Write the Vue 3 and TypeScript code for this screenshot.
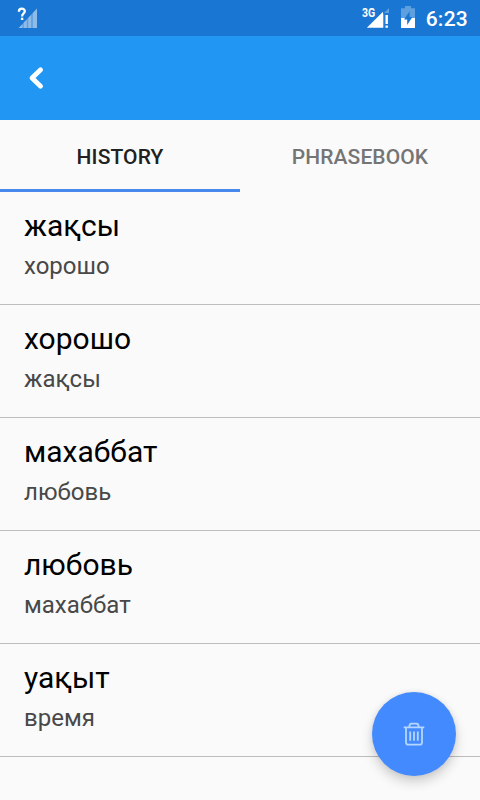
<script setup lang="ts">
import { ref } from 'vue'

interface Entry {
  source: string
  translation: string
}

const tabs: string[] = ['History', 'Phrasebook']
const active = ref<number>(0)
const entries = ref<Entry[]>([
  { source: 'жақсы', translation: 'хорошо' },
  { source: 'хорошо', translation: 'жақсы' },
  { source: 'махаббат', translation: 'любовь' },
  { source: 'любовь', translation: 'махаббат' },
  { source: 'уақыт', translation: 'время' },
])
</script>

<template>
  <div class="screen">
    <header class="status">
      <svg class="wifi" width="22" height="22" viewBox="0 0 22 22">
        <path class="half" d="M2.6 21 L6.4 17.2 V21Z M7.8 15.6 L10.8 12.4 V21 H7.8Z M12.2 11 L15.2 7.8 V21 H12.2Z M16.8 6 L21 1.4 V21 H16.8Z" />
        <path class="faint" d="M2.6 21 L21 1.4 V21Z" />
        <path class="mark" d="M2.9 4.7 C2.9 .8 8.9 .8 8.8 4.3 C8.7 6.5 6.1 6.6 6.1 9.4" />
        <rect class="solid" x="4.9" y="10.7" width="2.4" height="2.3" />
      </svg>
      <div class="status-right">
        <svg class="cell" width="28" height="26" viewBox="0 -4 28 26">
          <path class="half" d="M22 6 L27 1 V6 H22Z M21 6.8 H22.2 V20.8 H21Z" />
          <path class="solid" d="M4.8 20.8 L21 4.8 V20.8Z" />
          <path class="solid" d="M23.5 8 H25.9 V17 H23.5Z M23.5 18.6 H25.9 V20.8 H23.5Z" />
          <text class="network" x="0" y="9.7" textLength="13.2" lengthAdjust="spacingAndGlyphs">3G</text>
        </svg>
        <svg class="battery" width="14" height="22" viewBox="0 0 14 22">
          <path class="half" d="M0 2.3 H4 V0 H10 V2.3 H14 V12 H0Z" />
          <path class="solid" d="M0 12 H14 V22 H0Z" />
          <path class="bolt" d="M8.6 5.2 L3 13.4 H6.2 V19 L11.4 10.9 H8.6Z" />
        </svg>
        <span class="clock">6:23</span>
      </div>
    </header>
    <div class="appbar">
      <button class="back" aria-label="Back">
        <svg width="18" height="24" viewBox="0 0 18 24">
          <path d="M13.6 3.8 L5 12 L13.6 20.2" />
        </svg>
      </button>
    </div>
    <nav class="tabs">
      <button
        v-for="(tab, i) in tabs"
        :key="tab"
        class="tab"
        :class="{ active: active === i }"
        @click="active = i"
      >{{ tab }}</button>
    </nav>
    <ul class="list">
      <li v-for="entry in entries" :key="entry.source" class="row">
        <div class="source">{{ entry.source }}</div>
        <div class="translation">{{ entry.translation }}</div>
      </li>
    </ul>
    <button class="fab" aria-label="Clear">
      <svg width="22" height="24" viewBox="0 0 22 24">
        <path d="M.7 5.4 H21.3 M3 5.4 V20.4 Q3 22.6 5.2 22.6 H16.8 Q19 22.6 19 20.4 V5.4 M6.2 5 Q6.4 1.6 8.6 1.6 H13.4 Q15.6 1.6 15.8 5 M7.2 9.4 V18.8 M11 9.4 V18.8 M14.8 9.4 V18.8" />
      </svg>
    </button>
  </div>
</template>

<style>
body {
  background: #fafafa;
}
</style>

<style scoped>
.screen {
  position: relative;
  width: 480px;
  height: 800px;
  overflow: hidden;
  background: #fafafa;
  font-family: Roboto, sans-serif;
}
button {
  border: 0;
  margin: 0;
  padding: 0;
  background: none;
  font-family: inherit;
}
svg {
  display: block;
}
.status {
  display: flex;
  justify-content: space-between;
  height: 36px;
  box-sizing: border-box;
  padding: 7px 12px 0 16px;
  background: #1976d2;
  color: #fff;
}
.status-right {
  display: flex;
}
.solid {
  fill: #fff;
}
.half {
  fill: #fff;
  fill-opacity: 0.3;
}
.faint {
  fill: #fff;
  fill-opacity: 0.3;
}
.mark {
  fill: none;
  stroke: #fff;
  stroke-width: 2.3;
}
.bolt {
  fill: #1976d2;
}
.cell {
  margin-top: -4px;
}
.network {
  fill: #fff;
  font-size: 12.5px;
  font-weight: 700;
}
.battery {
  margin: -1px 11px 0 11px;
}
.clock {
  font-size: 21px;
  font-weight: 500;
  line-height: 24px;
  letter-spacing: 0.25px;
}
.appbar {
  display: flex;
  align-items: center;
  height: 84px;
  box-sizing: border-box;
  padding: 0 0 1px 27px;
  background: #2196f3;
}
.back path {
  fill: none;
  stroke: #fff;
  stroke-width: 4.8;
  stroke-linejoin: round;
  stroke-linecap: round;
}
.tabs {
  display: flex;
  height: 72px;
}
.tab {
  flex: 1;
  box-sizing: border-box;
  padding-top: 5px;
  border-bottom: 3px solid transparent;
  color: #757575;
  font-size: 21px;
  font-weight: 500;
  letter-spacing: 0.1px;
  text-transform: uppercase;
}
.tab.active {
  border-bottom-color: #4788ec;
  color: #212121;
}
.list {
  margin: 0;
  padding: 0;
  list-style: none;
}
.row {
  display: flex;
  flex-direction: column;
  gap: 9px;
  height: 113px;
  box-sizing: border-box;
  padding: 16px 24px 0;
  border-bottom: 1px solid #bdbdbd;
}
.source {
  color: #000;
  font-size: 30px;
  line-height: 35px;
}
.translation {
  color: #484848;
  font-size: 24px;
  line-height: 28px;
}
.fab {
  position: absolute;
  right: 24px;
  bottom: 24px;
  display: flex;
  align-items: center;
  justify-content: center;
  width: 84px;
  height: 84px;
  border-radius: 50%;
  background: #448aff;
  box-shadow: 0 6px 12px rgba(0, 0, 0, 0.18), 0 0 5px rgba(0, 0, 0, 0.08);
}
.fab path {
  fill: none;
  stroke: #b4d6ff;
  stroke-width: 1.8;
}
</style>
